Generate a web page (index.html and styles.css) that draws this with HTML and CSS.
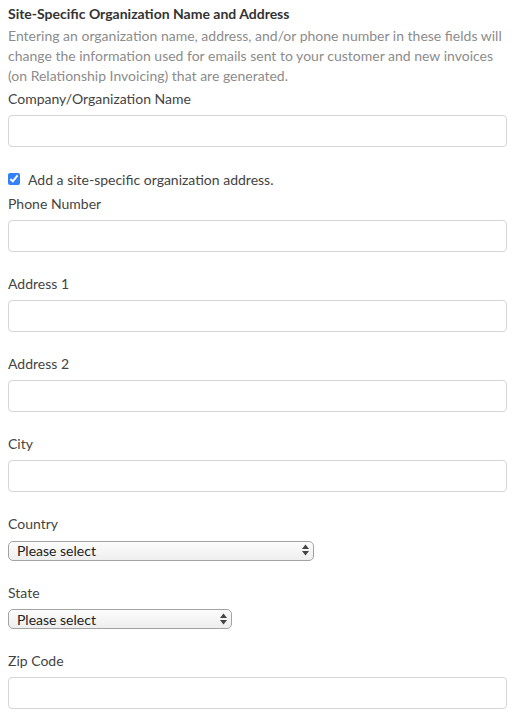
FILE: index.html
```html
<!DOCTYPE html>
<html lang="en">
<head>
    <meta charset="UTF-8">
    <meta name="viewport" content="width=device-width, initial-scale=1.0">
    <title>Site Organization</title>
    <link rel="stylesheet" href="styles.css">
</head>
<body>
    <div class="section">
        <h4 class="section-title">Site-Specific Organization Name and Address</h4>
        <p class="help-text">Entering an organization name, address, and/or phone number in these fields will change the information used for emails sent to your customer and new invoices (on Relationship Invoicing) that are generated.</p>

        <div class="field">
            <label class="field-label" for="company">Company/Organization Name</label>
            <input class="text-input" type="text" id="company">
        </div>

        <label class="check-row">
            <input type="checkbox" class="check" checked>
            <span>Add a site-specific organization address.</span>
        </label>

        <div class="field">
            <label class="field-label" for="phone">Phone Number</label>
            <input class="text-input" type="text" id="phone">
        </div>
        <div class="field">
            <label class="field-label" for="address1">Address 1</label>
            <input class="text-input" type="text" id="address1">
        </div>
        <div class="field">
            <label class="field-label" for="address2">Address 2</label>
            <input class="text-input" type="text" id="address2">
        </div>
        <div class="field">
            <label class="field-label" for="city">City</label>
            <input class="text-input" type="text" id="city">
        </div>
        <div class="field">
            <label class="field-label" for="country">Country</label>
            <div class="select-wrap country-select">
                <select class="select" id="country">
                    <option>Please select</option>
                </select>
                <svg class="select-arrows" width="7" height="12" viewBox="0 0 7 12">
                    <path d="M3.5 0.5 L7 5 L0 5 Z" fill="#444"/>
                    <path d="M3.5 11.5 L7 7 L0 7 Z" fill="#444"/>
                </svg>
            </div>
        </div>
        <div class="field">
            <label class="field-label" for="state">State</label>
            <div class="select-wrap state-select">
                <select class="select" id="state">
                    <option>Please select</option>
                </select>
                <svg class="select-arrows" width="7" height="12" viewBox="0 0 7 12">
                    <path d="M3.5 0.5 L7 5 L0 5 Z" fill="#444"/>
                    <path d="M3.5 11.5 L7 7 L0 7 Z" fill="#444"/>
                </svg>
            </div>
        </div>
        <div class="field">
            <label class="field-label" for="zip">Zip Code</label>
            <input class="text-input" type="text" id="zip">
        </div>
    </div>
</body>
</html>
```

FILE: styles.css
```css
body{
    margin: 0;
    padding: 4px 8px;
    font-family: Lato, "Open Sans", sans-serif;
    color: #444;
    background: #fff;
}
.section-title{
    margin: 0 0 2px 0;
    font-size: 14px;
    font-weight: bold;
    line-height: 20px;
    color: #333;
}
.help-text{
    margin: 0 0 3px 0;
    font-size: 14px;
    line-height: 20px;
    color: #8c8c8c;
}
.field{
    display: flex;
    flex-direction: column;
    gap: 6px;
    margin-bottom: 22px;
}
.field-label{
    font-size: 14px;
    line-height: 20px;
    color: #444;
}
.text-input{
    box-sizing: border-box;
    width: 100%;
    height: 32px;
    margin: 0;
    border: 1px solid #d6d6d6;
    border-radius: 4px;
    background: #fff;
    font-family: Lato, sans-serif;
    font-size: 14px;
}
.check-row{
    display: flex;
    align-items: center;
    gap: 8px;
    height: 20px;
    margin: 0 0 5px 0;
    font-size: 14px;
    color: #444;
}
.check{
    width: 12px;
    height: 12px;
    margin: 0;
    accent-color: #3480f6;
}
.select-wrap{
    position: relative;
}
.country-select{
    width: 306px;
}
.state-select{
    width: 224px;
}
.select{
    box-sizing: border-box;
    width: 100%;
    height: 20px;
    margin: 0;
    padding: 0 20px 0 8px;
    appearance: none;
    -webkit-appearance: none;
    border: 1px solid #a3a3a3;
    border-radius: 5px;
    background: linear-gradient(#fcfcfc, #eeeeee);
    font-family: Lato, sans-serif;
    font-size: 14px;
    color: #222;
}
.select-arrows{
    position: absolute;
    right: 5px;
    top: 4px;
    pointer-events: none;
}
```
